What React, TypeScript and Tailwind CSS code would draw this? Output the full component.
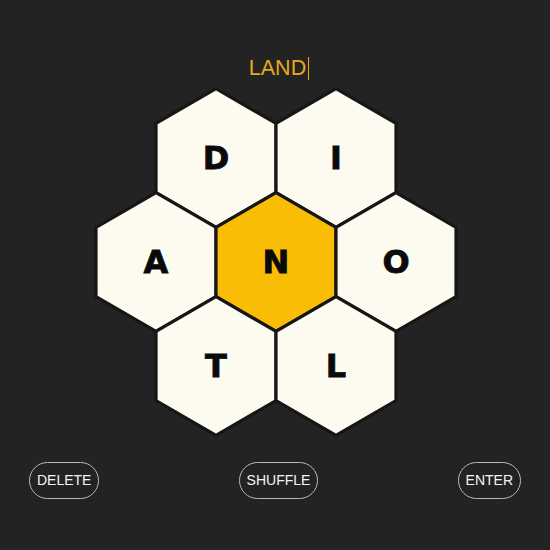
import React from "react";

const R = 69.28;
function hexPoints(cx: number, cy: number) {
  const h = R / 2;
  return [
    [cx, cy - R],
    [cx + 60, cy - h],
    [cx + 60, cy + h],
    [cx, cy + R],
    [cx - 60, cy + h],
    [cx - 60, cy - h],
  ]
    .map((p) => p.join(","))
    .join(" ");
}

const cells = [
  { l: "D", x: 123, y: 72 },
  { l: "I", x: 243, y: 72 },
  { l: "A", x: 63, y: 176 },
  { l: "N", x: 183, y: 176, c: true },
  { l: "O", x: 303, y: 176 },
  { l: "T", x: 123, y: 280 },
  { l: "L", x: 243, y: 280 },
];

export default function App() {
  return (
    <div className="w-[550px] h-[550px] bg-[#232323] flex flex-col items-center overflow-hidden">
      <div
        className="pt-[55px] h-[81px] text-[21.5px] leading-[26px] text-[#e8a71e] flex items-start ml-[8px]"
        style={{ fontFamily: '"Liberation Sans", Arial, sans-serif' }}
      >
        <span>LAND</span>
        <span className="w-[1px] h-[23px] mt-[2px] ml-[2px] bg-[#e8a71e]" />
      </div>
      <svg
        width="366"
        height="352"
        viewBox="0 0 366 352"
        className="mt-[5px] ml-[2px]"
      >
        {cells.map((c) => (
          <g key={c.l}>
            <polygon
              points={hexPoints(c.x, c.y)}
              fill={c.c ? "#f8bd04" : "#fdfbf0"}
              stroke="#161616"
              strokeWidth="3.2"
              strokeLinejoin="miter"
            />
            <text
              x={c.x}
              y={c.y + 11}
              textAnchor="middle"
              fontFamily='"DejaVu Sans", Verdana, sans-serif'
              fontWeight="bold"
              fontSize="32"
              fill="#0a0a0a"
              stroke="#0a0a0a"
              strokeWidth="0.8"
            >
              {c.l}
            </text>
          </g>
        ))}
      </svg>
      <div
        className="w-full flex justify-between px-[29px] mt-[24px]"
        style={{ fontFamily: '"Liberation Sans", Arial, sans-serif' }}
      >
        {["DELETE", "SHUFFLE", "ENTER"].map((b) => (
          <button
            key={b}
            className="h-[37px] px-[7px] rounded-full border border-[#b8b8b8] text-[14px] text-[#f4f4f4] bg-transparent"
          >
            {b}
          </button>
        ))}
      </div>
    </div>
  );
}
